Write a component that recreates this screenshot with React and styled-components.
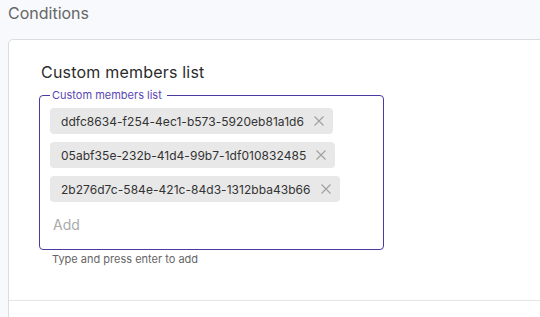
import styled, { createGlobalStyle } from "styled-components";

const GlobalStyle = createGlobalStyle`
  html, body {
    margin: 0;
    padding: 0;
    background: #f8f9fc;
    font-family: Inter, "Noto Sans", sans-serif;
    overflow: hidden;
  }
`;

const Page = styled.div`
  padding: 3px 0 0 8px;
  width: 600px;
`;

const PageTitle = styled.h2`
  margin: 0;
  font-size: 16px;
  line-height: 20px;
  font-weight: 400;
  color: #666;
`;

const Card = styled.section`
  margin-top: 16px;
  background: #fff;
  border: 1px solid #dcdcdc;
  border-radius: 5px;
  padding-top: 22px;
`;

const CardBody = styled.div`
  padding: 0 0 34px 32px;
  border-bottom: 1px solid #e6e6e6;
`;

const CardFooter = styled.div`
  height: 40px;
`;

const FieldTitle = styled.h3`
  margin: 0 0 6px;
  font-size: 16px;
  line-height: 20px;
  font-weight: 400;
  color: #2b2b2b;
  letter-spacing: 0.2px;
`;

const Fieldset = styled.fieldset`
  margin: 0 0 0 -2px;
  width: 345px;
  box-sizing: border-box;
  padding: 0 10px 14px;
  border: 1px solid #4b3a9f;
  border-radius: 4px;
`;

const Legend = styled.legend`
  padding: 0 5px 0 2px;
  font-size: 11px;
  line-height: 14px;
  color: #5a47b3;
`;

const ChipList = styled.div`
  display: flex;
  flex-direction: column;
  align-items: flex-start;
  gap: 8px;
  padding-top: 6px;
`;

const Chip = styled.div`
  display: flex;
  align-items: center;
  gap: 10px;
  height: 26px;
  padding: 0 9px 0 11px;
  background: #e8e8e8;
  border-radius: 4px;
  font-size: 12px;
  color: #333;
  letter-spacing: 0.04px;
`;

const RemoveIcon = styled.svg`
  width: 10px;
  height: 10px;
  stroke: #a0a0a0;
  stroke-width: 1.1;
`;

const AddInput = styled.input`
  display: block;
  margin-top: 13px;
  padding: 0 0 0 3px;
  border: none;
  outline: none;
  background: transparent;
  font-family: inherit;
  font-size: 14px;
  line-height: 20px;
  color: #333;

  &::placeholder {
    color: #aaa;
  }
`;

const Helper = styled.p`
  margin: 2px 0 0 11px;
  font-size: 11px;
  line-height: 14px;
  color: #666;
`;

const members = [
  "ddfc8634-f254-4ec1-b573-5920eb81a1d6",
  "05abf35e-232b-41d4-99b7-1df010832485",
  "2b276d7c-584e-421c-84d3-1312bba43b66",
];

export default function App() {
  return (
    <Page>
      <GlobalStyle />
      <PageTitle>Conditions</PageTitle>
      <Card>
        <CardBody>
          <FieldTitle>Custom members list</FieldTitle>
          <Fieldset>
            <Legend>Custom members list</Legend>
            <ChipList>
              {members.map((id) => (
                <Chip key={id}>
                  {id}
                  <RemoveIcon viewBox="0 0 10 10" fill="none">
                    <path d="M0.5 0.5 L9.5 9.5 M9.5 0.5 L0.5 9.5" />
                  </RemoveIcon>
                </Chip>
              ))}
            </ChipList>
            <AddInput placeholder="Add" />
          </Fieldset>
          <Helper>Type and press enter to add</Helper>
        </CardBody>
        <CardFooter />
      </Card>
    </Page>
  );
}
